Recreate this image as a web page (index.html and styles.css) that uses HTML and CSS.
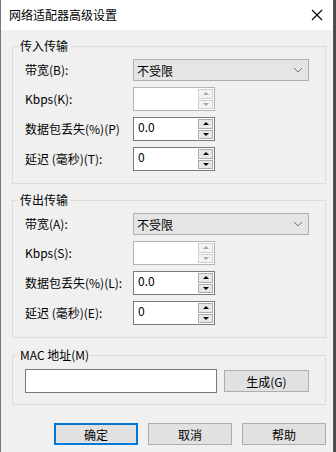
FILE: index.html
```html
<!DOCTYPE html>
<html>
<head>
  <title>网络适配器高级设置</title>
  <link rel="stylesheet" href="styles.css">
</head>
<body>
  <div class="dialog">
    <div class="titlebar">
      <span class="title">网络适配器高级设置</span>
      <svg class="close" width="12" height="12" viewBox="0 0 12 12">
        <path d="M1 1 L11 11 M11 1 L1 11" stroke="#000" stroke-width="1.1" fill="none"/>
      </svg>
    </div>
    <div class="content">
      <fieldset class="group">
        <legend>传入传输</legend>
        <div class="rows">
          <label>带宽(B):</label>
          <div class="select">
            <span>不受限</span>
            <svg class="chevron" width="10" height="6" viewBox="0 0 10 6"><path d="M1 1 L5 5 L9 1" stroke="#777" fill="none"/></svg>
          </div>
          <label>Kbps(K):</label>
          <div class="spin disabled">
            <span class="value"></span>
            <div class="arrows"><span class="up"></span><span class="down"></span></div>
          </div>
          <label>数据包丢失(%)(P)</label>
          <div class="spin">
            <span class="value">0.0</span>
            <div class="arrows"><span class="up"></span><span class="down"></span></div>
          </div>
          <label>延迟 (毫秒)(T):</label>
          <div class="spin">
            <span class="value">0</span>
            <div class="arrows"><span class="up"></span><span class="down"></span></div>
          </div>
        </div>
      </fieldset>

      <fieldset class="group">
        <legend>传出传输</legend>
        <div class="rows">
          <label>带宽(A):</label>
          <div class="select">
            <span>不受限</span>
            <svg class="chevron" width="10" height="6" viewBox="0 0 10 6"><path d="M1 1 L5 5 L9 1" stroke="#777" fill="none"/></svg>
          </div>
          <label>Kbps(S):</label>
          <div class="spin disabled">
            <span class="value"></span>
            <div class="arrows"><span class="up"></span><span class="down"></span></div>
          </div>
          <label>数据包丢失(%)(L):</label>
          <div class="spin">
            <span class="value">0.0</span>
            <div class="arrows"><span class="up"></span><span class="down"></span></div>
          </div>
          <label>延迟 (毫秒)(E):</label>
          <div class="spin">
            <span class="value">0</span>
            <div class="arrows"><span class="up"></span><span class="down"></span></div>
          </div>
        </div>
      </fieldset>

      <fieldset class="group mac">
        <legend>MAC 地址(M)</legend>
        <div class="mac-row">
          <div class="textbox"></div>
          <button class="btn gen">生成(G)</button>
        </div>
      </fieldset>

      <div class="footer">
        <button class="btn default">确定</button>
        <button class="btn">取消</button>
        <button class="btn">帮助</button>
      </div>
    </div>
  </div>
</body>
</html>
```

FILE: styles.css
```css
body {
  margin: 0;
  width: 336px;
  height: 452px;
  background-color: #4a4a4a;
  font-family: "Noto Sans CJK SC", "Microsoft YaHei", sans-serif;
  font-size: 12px;
  color: #000;
}

.dialog {
  width: 332px;
  height: 452px;
  background-color: #f0f0f0;
  border-left: 1px solid #777;
  border-right: 1px solid #555;
}

.titlebar {
  height: 30px;
  background-color: #fff;
  display: flex;
  align-items: center;
  justify-content: space-between;
  padding: 0 10px 0 8px;
}

.title {
  line-height: 14px;
}

.content {
  padding: 9px 7px 0 11px;
}

.group {
  margin: 0;
  padding: 0 0 12px 0;
  border: 1px solid #dcdcdc;
}

.group + .group {
  margin-top: 9px;
}

.group.mac {
  margin-top: 10px;
  padding-bottom: 11px;
}

legend {
  margin-left: 5px;
  padding: 0 2px;
  line-height: 14px;
}

.rows {
  display: grid;
  grid-template-columns: 108px 176px;
  grid-template-rows: 22px 24px 24px 24px;
  row-gap: 6px;
  align-items: center;
  padding: 6px 12px 0 12px;
}

.rows label {
  line-height: 14px;
  white-space: nowrap;
}

.select {
  height: 20px;
  background-color: #e5e5e5;
  border: 1px solid #adadad;
  display: flex;
  align-items: center;
  justify-content: space-between;
  padding: 0 5px 0 3px;
}

.spin {
  width: 80px;
  height: 22px;
  background-color: #fff;
  border: 1px solid #7a7a7a;
  display: flex;
  justify-self: start;
}

.spin.disabled {
  border-color: #b4b4b4;
}

.value {
  flex: 1;
  padding: 2px 0 0 4px;
  line-height: 14px;
}

.arrows {
  width: 15px;
  display: flex;
  flex-direction: column;
  gap: 1px;
  padding: 1px 1px 1px 0;
}

.arrows span {
  flex: 1;
  background-color: #e8e8e8;
  border: 1px solid #adadad;
  display: flex;
  align-items: center;
  justify-content: center;
}

.arrows .up::after {
  content: "";
  border-left: 3px solid transparent;
  border-right: 3px solid transparent;
  border-bottom: 3px solid #000;
}

.arrows .down::after {
  content: "";
  border-left: 3px solid transparent;
  border-right: 3px solid transparent;
  border-top: 3px solid #000;
}

.disabled .arrows span {
  background-color: #f4f4f4;
  border-color: #d0d0d0;
}

.disabled .arrows .up::after {
  border-bottom-color: #a8a8a8;
}

.disabled .arrows .down::after {
  border-top-color: #a8a8a8;
}

.mac-row {
  display: flex;
  align-items: center;
  gap: 7px;
  padding: 7px 0 0 12px;
}

.textbox {
  width: 190px;
  height: 22px;
  background-color: #fff;
  border: 1px solid #7a7a7a;
}

.btn {
  font-family: inherit;
  font-size: 12px;
  color: #000;
  background-color: #e1e1e1;
  border: 1px solid #adadad;
  height: 22px;
  padding: 0;
}

.btn.gen {
  width: 85px;
}

.footer {
  display: flex;
  justify-content: flex-end;
  gap: 10px;
  margin-top: 18px;
}

.footer .btn {
  width: 84px;
}

.btn.default {
  border: 2px solid #0078d7;
}
```
